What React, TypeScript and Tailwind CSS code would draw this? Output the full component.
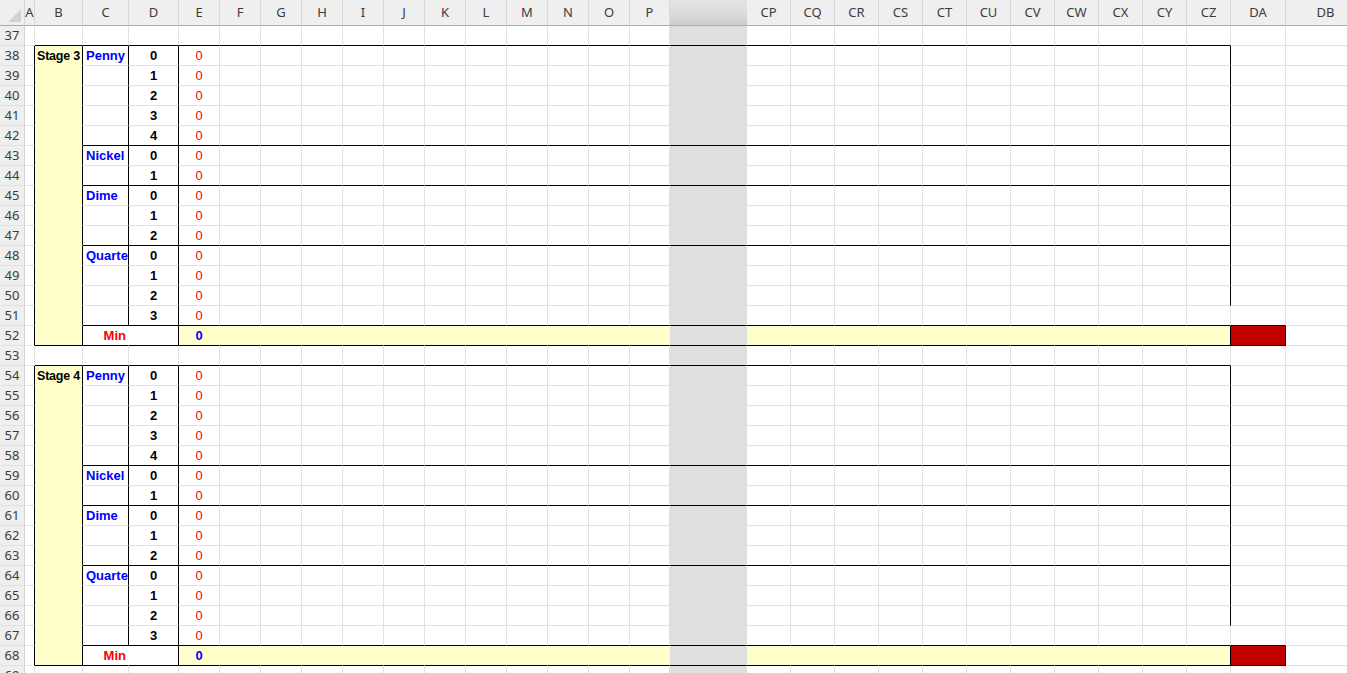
import React from "react";

type Col = { name: string; w: number };

const cols: Col[] = [
  { name: "A", w: 10 },
  { name: "B", w: 48 },
  { name: "C", w: 46 },
  { name: "D", w: 50 },
  { name: "E", w: 41 },
  ...["F", "G", "H", "I", "J", "K", "L", "M", "N", "O"].map((n) => ({ name: n, w: 41 })),
  { name: "P", w: 40 },
  { name: "", w: 77 },
  ...["CP", "CQ", "CR", "CS", "CT", "CU", "CV", "CW", "CX", "CY", "CZ"].map((n) => ({ name: n, w: 44 })),
  { name: "DA", w: 55 },
  { name: "DB", w: 80 },
];

const GRAY = 16;
const CZ = 27;
const DA = 28;

const rows = Array.from({ length: 33 }, (_, i) => 37 + i);

function blockInfo(r: number): { r0: number; k: number; stage: number } | null {
  if (r >= 38 && r <= 52) return { r0: 38, k: r - 38, stage: 3 };
  if (r >= 54 && r <= 68) return { r0: 54, k: r - 54, stage: 4 };
  return null;
}

const coinAt: Record<number, string> = { 0: "Penny", 5: "Nickel", 7: "Dime", 10: "Quarte" };
const numAt: Record<number, string> = {
  0: "0", 1: "1", 2: "2", 3: "3", 4: "4",
  5: "0", 6: "1",
  7: "0", 8: "1", 9: "2",
  10: "0", 11: "1", 12: "2", 13: "3",
};

function Cell({ r, c }: { r: number; c: number }) {
  const info = blockInfo(r);
  const k = info ? info.k : -1;
  const before = r === 37 || r === 53;

  let rightBlack = false;
  let bottomBlack = false;
  let bg: "white" | "yellow" | "red" | "gray" = "white";
  let hideRight = false;
  let hideBottom = false;

  if (c === GRAY) bg = "gray";

  if (info) {
    if (c === 0 || c === 1) rightBlack = true;
    if (c === 2 && k <= 13) rightBlack = true;
    if (c === 3) rightBlack = true;
    if (c === CZ && (k <= 12 || k === 14)) rightBlack = true;
    if (c === DA && k === 14) rightBlack = true;

    if (c === 1) {
      bg = "yellow";
      if (k === 14) bottomBlack = true;
      else hideBottom = true;
    }
    if ((k === 4 || k === 6 || k === 9) && c >= 2 && c <= CZ) bottomBlack = true;
    if (k === 13 && c >= 2 && c <= DA) bottomBlack = true;
    if (k === 14 && c >= 1 && c <= DA) bottomBlack = true;

    if (k === 14) {
      if (c >= 4 && c <= CZ && c !== GRAY) bg = "yellow";
      if (c === DA) bg = "red";
      if (c === 2) hideRight = true;
    }
  }
  if (before && c >= 1 && c <= CZ) bottomBlack = true;

  let cls =
    "h-full shrink-0 border-r border-b overflow-hidden whitespace-nowrap flex items-center pt-[1px] text-[13px] font-['Liberation_Sans',Arial,sans-serif] ";
  if (bg === "yellow") cls += "bg-[#ffffcc] ";
  else if (bg === "red") cls += "bg-[#c00000] ";
  else if (bg === "gray") cls += "bg-[#dfdfdf] ";
  else cls += "bg-white ";

  if (rightBlack) cls += "border-r-black ";
  else if (bg === "gray") cls += "border-r-[#dfdfdf] ";
  else if (bg === "yellow" && c !== 1) cls += "border-r-[#ffffcc] ";
  else if (hideRight) cls += "border-r-white ";
  else cls += "border-r-[#e1e1e1] ";

  if (bottomBlack) cls += "border-b-black ";
  else if (bg === "gray") cls += "border-b-[#dfdfdf] ";
  else if (hideBottom) cls += "border-b-[#ffffcc] ";
  else cls += "border-b-[#e1e1e1] ";

  let content: React.ReactNode = null;
  if (info) {
    if (c === 1 && k === 0) {
      cls += "pl-[2px] font-bold text-black ";
      content = <span className="text-[12.5px] tracking-[-0.2px]">{`Stage ${info.stage}`}</span>;
    }
    if (c === 2) {
      if (k === 14) {
        cls += "justify-end pr-[2px] font-bold text-[#ff0000] ";
        content = "Min";
      } else if (coinAt[k]) {
        cls += "pl-[3px] font-bold text-[#0000ff] ";
        content = coinAt[k];
      }
    }
    if (c === 3 && k <= 13) {
      cls += "justify-center font-bold text-black ";
      content = numAt[k];
    }
    if (c === 4) {
      if (k <= 13) {
        cls += "justify-center text-[#ff0000] ";
        content = "0";
      } else {
        cls += "justify-center font-bold text-[#0000ff] ";
        content = "0";
      }
    }
  }

  return (
    <div className={cls} style={{ width: cols[c].w }}>
      {content}
    </div>
  );
}

export default function App() {
  return (
    <div className="w-[1347px] h-[673px] overflow-hidden bg-white select-none">
      <div className="flex h-[26px] w-max">
        <div className="w-[25px] h-full shrink-0 bg-[#efefef] border-r border-b border-r-[#d4d4d4] border-b-[#ababab] flex items-end justify-end">
          <svg width="24" height="25" viewBox="0 0 24 25">
            <polygon points="21,9 21,22 8,22" fill="#d2d2d2" />
          </svg>
        </div>
        {cols.map((col, i) =>
          i === GRAY ? (
            <div
              key={i}
              className="h-full shrink-0 bg-gradient-to-b from-[#e4e4e4] via-[#dcdcdc] to-[#cdcdcd] border-b border-b-[#ababab]"
              style={{ width: col.w }}
            />
          ) : (
            <div
              key={i}
              className="h-full shrink-0 bg-[#efefef] border-r border-b border-r-[#d8d8d8] border-b-[#ababab] flex items-center justify-center pt-[1px] text-[13px] text-[#3c3c3c] font-['Noto_Sans','Open_Sans',sans-serif] overflow-hidden"
              style={{ width: col.w }}
            >
              {col.name}
            </div>
          )
        )}
      </div>
      {rows.map((r) => (
        <div key={r} className="flex h-[20px] w-max">
          <div className="w-[25px] h-full shrink-0 bg-[#efefef] border-r border-b border-r-[#d4d4d4] border-b-[#e1e1e1] flex items-center justify-center pt-[1px] text-[13px] text-[#3c3c3c] font-['Noto_Sans','Open_Sans',sans-serif]">
            {r}
          </div>
          {cols.map((_, c) => (
            <Cell key={c} r={r} c={c} />
          ))}
        </div>
      ))}
    </div>
  );
}
